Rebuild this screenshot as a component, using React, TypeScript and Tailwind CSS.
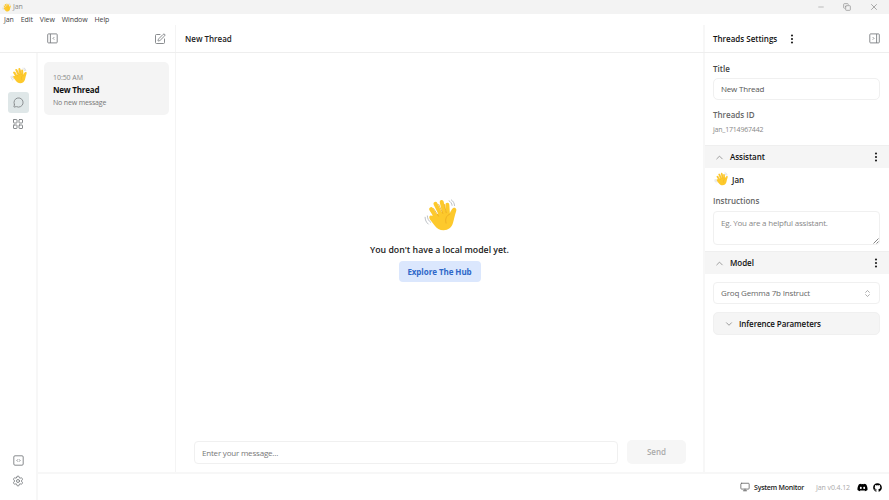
import React from "react";
import { SquarePen, MessageCircle, LayoutGrid, Settings, Monitor, ChevronUp, ChevronDown, ChevronsUpDown, EllipsisVertical, Minus, X, Copy } from "lucide-react";
import { FaDiscord, FaGithub } from "react-icons/fa";

function Wave({ className = "" }: { className?: string }) {
  return (
    <svg viewBox="0 0 36 36" className={`shrink-0 ${className}`} fill="none" strokeLinecap="round">
      <g stroke="#fdc92c" strokeWidth="4.2">
        <path d="M8.6 11.8 17 25" />
        <path d="M13.2 6.2 20 20" />
        <path d="M19.8 4.2 23 18" />
        <path d="M25.8 7.2 26.5 19" />
      </g>
      <path d="M9 18.8 13 18 23 13.5l5.2 3c.5-1.5 1.3-2.9 2.3-4.4 1-1.5 2.4-2.2 3.7-1.5 1.3.7 1.3 2.2.8 3.7-1.5 4.2-2 8-3.2 12-1.4 5-5 7.9-10 7.9-4.2 0-7.3-2-9.5-5.2L7.2 22.4c-1.4-2.6.2-4.3 1.8-3.6Z" fill="#fdc92c" />
      <g stroke="#e9a820" strokeWidth=".8">
        <path d="m11.2 11.2 5.2 8M16.6 6.8l4.4 9.6M22.6 6.8l2 8.8M28.4 17c-3.4 1.4-5.4 5-4 9.6" />
      </g>
      <g stroke="#b9bdc2" strokeWidth="1">
        <path d="M4.6 19c.1 3 1.3 5.2 3.6 6.8M2.2 20.4c.1 3 1.2 5.4 3.4 7.2M27.6 3c1.8 1.1 2.9 2.6 3.2 4.8M30 2c2 1.3 3.2 3.4 3.4 6" />
      </g>
    </svg>
  );
}

function PanelIcon({ right = false }: { right?: boolean }) {
  return (
    <svg viewBox="0 0 11 11" className={`size-[11px] ${right ? "-scale-x-100" : ""}`} fill="none" stroke="#7c7f82" strokeWidth=".9">
      <rect x=".7" y=".9" width="9.5" height="9" rx=".8" />
      <path d="M3.4 1v9M7.2 4.2 6 5.4l1.2 1.2" />
    </svg>
  );
}

function CodeSquare() {
  return (
    <svg viewBox="0 0 11 11" className="size-[11px]" fill="none" stroke="#7c7f82" strokeWidth=".9">
      <rect x=".8" y=".8" width="9.4" height="9.4" rx="1.2" />
      <path d="M4.8 4.4 3.9 5.5l.9 1.1M6.2 4.4l.9 1.1-.9 1.1" />
    </svg>
  );
}

function Dots() {
  return <EllipsisVertical className="size-[12px] text-[#222]" strokeWidth={2.4} />;
}

function SectionBar({ title, className = "" }: { title: string; className?: string }) {
  return (
    <div className={`flex h-[23px] shrink-0 items-center border-t border-[#efefef] bg-[#f5f5f5] pr-[7px] pl-[9px] ${className}`}>
      <ChevronUp className="size-[11px] text-[#777]" strokeWidth={1.5} />
      <span className="ml-[5px] flex-1 text-[8px] font-semibold tracking-[-0.05px] text-[#111]">{title}</span>
      <Dots />
    </div>
  );
}

export default function App() {
  return (
    <div className="flex h-[500px] w-[889px] flex-col overflow-hidden bg-white font-['Open_Sans','Noto_Sans',sans-serif] text-[8px] leading-[12px] whitespace-nowrap text-[#222]">
      <div className="flex h-[14px] shrink-0 items-center bg-[#f3f3f3] pl-[2px] text-[7px] text-[#888]">
        <Wave className="size-[9px]" />
        <span className="ml-[2px] flex-1 tracking-[-0.1px]">Jan</span>
        <div className="flex items-center gap-[18px] pr-[10px] text-[#999]">
          <Minus className="size-[8px]" strokeWidth={1.8} />
          <Copy className="size-[8px] -scale-x-100 -rotate-90" strokeWidth={2.4} />
          <X className="size-[10px]" strokeWidth={2} />
        </div>
      </div>
      <div className="flex h-[11px] shrink-0 items-center gap-[7px] pl-[4px] text-[7px] tracking-[-0.1px] text-[#444]">
        <span>Jan</span><span>Edit</span><span>View</span><span>Window</span><span>Help</span>
      </div>
      <div className="flex h-[28px] shrink-0 border-b border-[#eeeeee]">
        <div className="flex w-[176px] items-center justify-between border-r border-[#f4f4f4] pr-[9px] pl-[47px]">
          <PanelIcon />
          <SquarePen className="size-[12px] text-[#7c7f82]" strokeWidth={1.8} />
        </div>
        <div className="flex flex-1 items-center pt-[1px] pl-[9px] font-semibold">New Thread</div>
        <div className="flex w-[186px] items-center border-l-2 border-[#f7f7f7] pr-[9px] pl-[8px]">
          <span className="pt-[1px] font-semibold text-[#111]">Threads Settings</span>
          <span className="ml-[9px] flex-1"><Dots /></span>
          <PanelIcon right />
        </div>
      </div>
      <div className="flex min-h-0 flex-1">
        <nav className="flex w-[38px] shrink-0 flex-col items-center border-r-2 border-[#f7f7f7] pt-[14px] pb-[13px] text-[#7c7f82]">
          <Wave className="size-[17px]" />
          <div className="mt-[8px] flex h-[21px] w-[21px] items-center justify-center rounded-[3px] bg-[#dfe7e8]">
            <MessageCircle className="size-[11px]" strokeWidth={1.8} />
          </div>
          <LayoutGrid className="mt-[5px] size-[12px]" strokeWidth={1.8} />
          <div className="flex-1" />
          <CodeSquare />
          <Settings className="mt-[9px] size-[12px]" strokeWidth={1.8} />
        </nav>
        <div className="flex min-w-0 flex-1 flex-col">
          <div className="flex min-h-0 flex-1">
            <aside className="w-[138px] shrink-0 border-r border-[#f4f4f4] pt-[9px] pl-[6px]">
              <div className="h-[53px] w-[125px] rounded-[5px] bg-[#f4f4f4] pt-[10px] pl-[9px]">
                <div className="text-[7px] tracking-[-0.06px] text-[#888]">10:50 AM</div>
                <div className="font-bold tracking-[-0.2px] text-[#111]">New Thread</div>
                <div className="text-[7px] leading-[13px] tracking-[-0.16px] text-[#777]">No new message</div>
              </div>
            </aside>
            <main className="flex min-w-0 flex-1 flex-col">
              <div className="flex flex-1 flex-col items-center pt-[145px]">
                <Wave className="size-[34px]" />
                <p className="mt-[12px] text-[8.75px] font-semibold">You don't have a local model yet.</p>
                <button className="mt-[5px] h-[21px] w-[82px] rounded-[4px] bg-[#dbe7fd] font-bold tracking-[-0.06px] text-[#2f68c9]">Explore The Hub</button>
              </div>
              <div className="flex h-[32px] shrink-0 gap-[9px] pl-[18px]">
                <div className="mt-[1px] flex h-[23px] w-[424px] items-center rounded-[4px] border border-[#f0f0f0] pl-[7px] tracking-[-0.2px] text-[#777]">Enter your message...</div>
                <button className="h-[24px] w-[59px] rounded-[5px] bg-[#f6f6f6] font-semibold text-[#aaa]">Send</button>
              </div>
            </main>
            <aside className="flex w-[186px] shrink-0 flex-col border-l-2 border-[#f7f7f7] pt-[10px]">
              <div className="flex flex-col px-[8px]">
                <span className="font-semibold text-[#444]">Title</span>
                <div className="mt-[3px] mr-[1px] flex h-[22px] items-center rounded-[5px] border border-[#f0f0f0] pl-[7px] tracking-[-0.2px] text-[#555]">New Thread</div>
                <span className="mt-[9px] font-semibold text-[#666]">Threads ID</span>
                <span className="mt-[3px] text-[7px] tracking-[-0.2px] text-[#888]">jan_1714967442</span>
              </div>
              <SectionBar title="Assistant" className="mt-[9px]" />
              <div className="flex h-[22px] shrink-0 items-center pl-[9px]"><Wave className="size-[14px]" /><span className="ml-[4px] pt-[1px] font-semibold">Jan</span></div>
              <div className="flex flex-col px-[8px]">
                <span className="mt-[5px] font-semibold text-[#666]">Instructions</span>
                <div className="mt-[4px] mr-[1px] flex h-[34px] justify-between rounded-[4px] border border-[#f0f0f0] pt-[5px] pl-[7px] tracking-[-0.2px] text-[#888]">
                  <span>Eg. You are a helpful assistant.</span>
                  <svg viewBox="0 0 6 6" className="size-[6px] self-end" stroke="#777" strokeWidth=".9"><path d="M.5 5.5l5-5M3.5 5.5l2-2" /></svg>
                </div>
              </div>
              <SectionBar title="Model" className="mt-[6px]" />
              <div className="flex flex-col pt-[8px] pr-[9px] pl-[8px]">
                <div className="flex h-[22px] items-center justify-between rounded-[4px] border border-[#f0f0f0] pr-[7px] pl-[7px] tracking-[-0.17px] text-[#666]">
                  <span>Groq Gemma 7b Instruct</span><ChevronsUpDown className="size-[9px] text-[#888]" strokeWidth={1.8} />
                </div>
                <div className="mt-[8px] flex h-[23px] items-center rounded-[5px] border border-[#f0f0f0] bg-[#f5f5f5] pl-[10px]">
                  <ChevronDown className="size-[10px] text-[#777]" strokeWidth={1.7} />
                  <span className="ml-[5px] font-semibold tracking-[-0.1px] text-[#111]">Inference Parameters</span>
                </div>
              </div>
            </aside>
          </div>
          <footer className="flex h-[28px] shrink-0 items-center justify-end border-t-2 border-[#f7f7f7] pr-[7px] text-[7px]">
            <Monitor className="size-[10px] text-[#666]" strokeWidth={2} />
            <span className="ml-[4px] pt-[1px] font-semibold tracking-[-0.25px]">System Monitor</span>
            <span className="ml-[12px] pt-[1px] tracking-[-0.1px] text-[#aaa]">Jan v0.4.12</span>
            <FaDiscord className="ml-[7px] size-[11px] text-black" />
            <FaGithub className="ml-[5px] size-[9px] text-black" />
          </footer>
        </div>
      </div>
    </div>
  );
}
